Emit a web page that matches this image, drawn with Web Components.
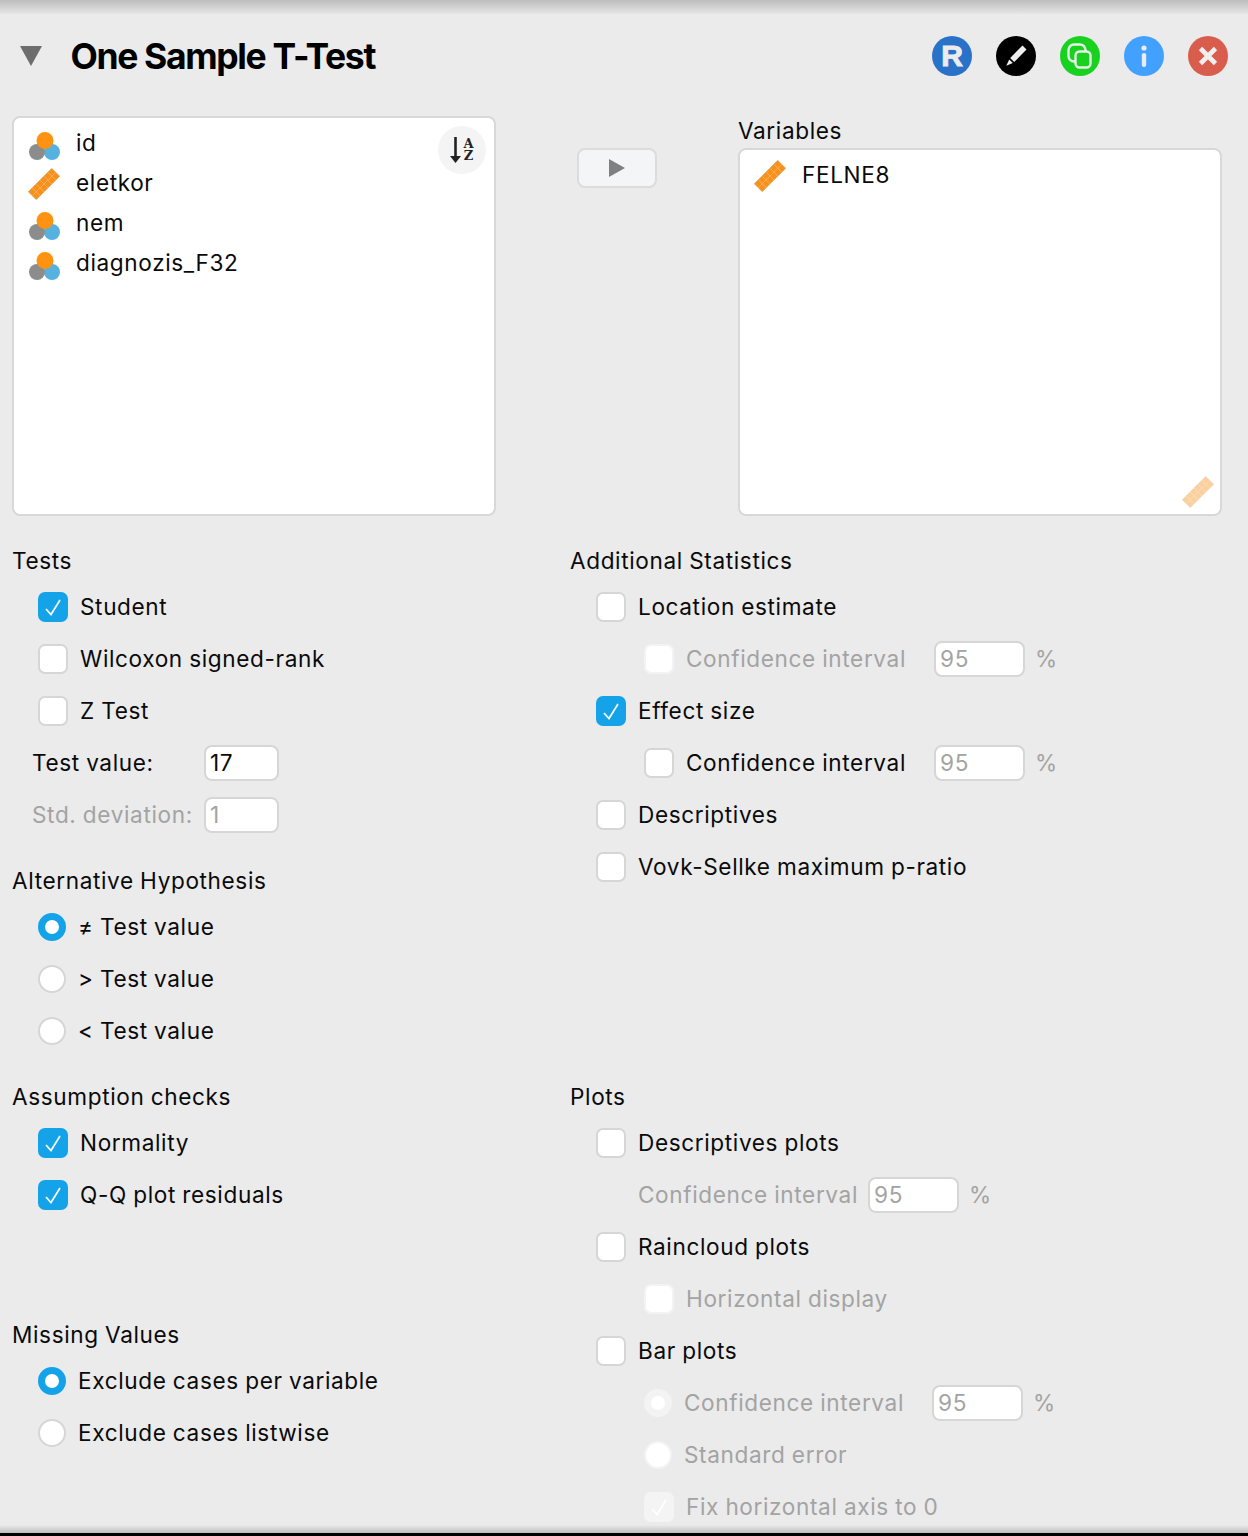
<!DOCTYPE html>
<html lang="en"><head><meta charset="utf-8"><title>One Sample T-Test</title>
<style>
html,body{margin:0;padding:0;background:#ebebeb;}
body{font-family:Inter,"Noto Sans",sans-serif;font-size:22.6px;color:#0a0a0a;--ls:.62px;word-spacing:-.6px;}
</style></head><body>
<jasp-panel>
  <jasp-header title="One Sample T-Test"></jasp-header>
  <jasp-selector>
    <jasp-var slot="source" type="nominal">id</jasp-var>
    <jasp-var slot="source" type="scale">eletkor</jasp-var>
    <jasp-var slot="source" type="nominal">nem</jasp-var>
    <jasp-var slot="source" type="nominal">diagnozis_F32</jasp-var>
    <jasp-var slot="target" type="scale" wide>FELNE8</jasp-var>
  </jasp-selector>
  <jasp-options>
    <jasp-col slot="tl">
      <jasp-group title="Tests">
        <jasp-opt kind="check" checked>Student</jasp-opt>
        <jasp-opt kind="check">Wilcoxon signed-rank</jasp-opt>
        <jasp-opt kind="check">Z Test</jasp-opt>
        <jasp-field label="Test value:" value="17"></jasp-field>
        <jasp-field label="Std. deviation:" value="1" disabled></jasp-field>
      </jasp-group>
      <jasp-group title="Alternative Hypothesis">
        <jasp-opt kind="radio" checked>≠ Test value</jasp-opt>
        <jasp-opt kind="radio">&gt; Test value</jasp-opt>
        <jasp-opt kind="radio">&lt; Test value</jasp-opt>
      </jasp-group>
    </jasp-col>
    <jasp-col slot="tr">
      <jasp-group title="Additional Statistics">
        <jasp-opt kind="check">Location estimate</jasp-opt>
        <jasp-opt kind="check" sub disabled pct="95" at="934">Confidence interval</jasp-opt>
        <jasp-opt kind="check" checked>Effect size</jasp-opt>
        <jasp-opt kind="check" sub pct="95" at="934">Confidence interval</jasp-opt>
        <jasp-opt kind="check">Descriptives</jasp-opt>
        <jasp-opt kind="check">Vovk-Sellke maximum p-ratio</jasp-opt>
      </jasp-group>
    </jasp-col>
    <jasp-col slot="bl" spread>
      <jasp-group title="Assumption checks">
        <jasp-opt kind="check" checked>Normality</jasp-opt>
        <jasp-opt kind="check" checked>Q-Q plot residuals</jasp-opt>
      </jasp-group>
      <jasp-group title="Missing Values">
        <jasp-opt kind="radio" checked>Exclude cases per variable</jasp-opt>
        <jasp-opt kind="radio">Exclude cases listwise</jasp-opt>
      </jasp-group>
    </jasp-col>
    <jasp-col slot="br">
      <jasp-group title="Plots">
        <jasp-opt kind="check">Descriptives plots</jasp-opt>
        <jasp-opt kind="none" disabled pct="95" at="868">Confidence interval</jasp-opt>
        <jasp-opt kind="check">Raincloud plots</jasp-opt>
        <jasp-opt kind="check" sub disabled>Horizontal display</jasp-opt>
        <jasp-opt kind="check">Bar plots</jasp-opt>
        <jasp-opt kind="radio" sub disabled checked pct="95" at="932">Confidence interval</jasp-opt>
        <jasp-opt kind="radio" sub disabled>Standard error</jasp-opt>
        <jasp-opt kind="check" sub disabled checked>Fix horizontal axis to 0</jasp-opt>
      </jasp-group>
    </jasp-col>
  </jasp-options>
</jasp-panel>
<script>
const RULER=`<svg width="32" height="32" viewBox="0 0 32 32" style="display:block"><g transform="rotate(-45 16 16)"><rect x="-.5" y="10.5" width="33" height="11" fill="#f7911c" stroke="#dd9a4c" stroke-width=".8"/><path d="M-.5 16H32.5M5 10.5V21.5M10.5 10.5V21.5M16 10.5V21.5M21.5 10.5V21.5M27 10.5V21.5" stroke="#ffb15e" stroke-width=".8" fill="none"/></g></svg>`;
const NOMINAL=`<svg width="32" height="32" viewBox="0 0 32 32" style="display:block"><circle cx="24" cy="24" r="8" fill="#55b2e0"/><circle cx="9" cy="24" r="8" fill="#8c8c8c"/><circle cx="17" cy="12.5" r="8.5" fill="#ff9210"/></svg>`;
const def=(n,html)=>customElements.define(n,class extends HTMLElement{
  connectedCallback(){ if(this.shadowRoot) return; this.attachShadow({mode:'open'}).innerHTML=typeof html==='function'?html(this):html; }
});
def('jasp-panel',`<style>:host{display:flex;flex-direction:column;height:1536px;overflow:hidden;background:#ebebeb}
.top{height:14px;flex:none;background:linear-gradient(#bdbdbd,#e6e6e6)}
main{flex:1;min-height:0;display:flex;flex-direction:column}
.bot{flex:none;height:8px;background:linear-gradient(#ebebeb,#bdbdbd)}
.blk{flex:none;height:3px;background:#000}</style>
<div class="top"></div><main><slot></slot></main><div class="bot"></div><div class="blk"></div>`);
def('jasp-header',e=>`<style>:host{display:flex;align-items:center;height:84px;flex:none;padding:0 20px;font:inherit}
.tri{width:0;height:0;border-left:11.5px solid transparent;border-right:11.5px solid transparent;border-top:20px solid #6d6d6d;margin-right:28.5px}
h1{margin:2px 0 0;font:700 35.5px/42px Inter,sans-serif;letter-spacing:-1.35px;word-spacing:0;color:#000;flex:1}
.btns{display:flex;gap:24px}
.b{width:40px;height:40px;border-radius:50%;display:flex;align-items:center;justify-content:center;color:#ececec}
.r{font:700 30px/40px "Liberation Sans",sans-serif;-webkit-text-stroke:1px #ececec}
svg{display:block}</style>
<div class="tri"></div><h1>${e.getAttribute('title')}</h1>
<div class="btns">
<div class="b r" style="background:#2a72c8">R</div>
<div class="b" style="background:#000"><svg width="40" height="40" viewBox="0 0 40 40" fill="#efefef"><path d="M26.5 9.5 30.5 13.5 18.2 26 14.2 22Z"/><path d="M13.2 23.4 16.8 27 10.3 29.7Z"/></svg></div>
<div class="b" style="background:#19d11f"><svg width="40" height="40" viewBox="0 0 40 40" fill="none" stroke="#e8efe8" stroke-width="2.4"><rect x="8.5" y="8.5" width="17" height="17" rx="5.5"/><rect x="15.5" y="15.5" width="15" height="16" rx="4" fill="#19d11f"/></svg></div>
<div class="b" style="background:#42a0ff"><svg width="40" height="40" viewBox="0 0 40 40" fill="#ececec"><circle cx="20" cy="12" r="2.6"/><rect x="17.8" y="17" width="4.4" height="14" rx="2.2"/></svg></div>
<div class="b" style="background:#d85d4d"><svg width="40" height="40" viewBox="0 0 40 40" stroke="#efefef" stroke-width="4.6"><path d="M12.5 12.5 27.5 27.5M27.5 12.5 12.5 27.5"/></svg></div>
</div>`);
def('jasp-selector',`<style>:host{display:block;flex:none;padding:18px 0 0 12px;--b:#d8d8d8}
.g{display:grid;grid-template-columns:484px 242px 484px;height:400px}
.box{background:#fff;border:2px solid var(--b);border-radius:8px;box-sizing:border-box;position:relative}
.src{padding:5px 0 0 14px}
.sort{position:absolute;top:8px;right:8px;width:48px;height:48px;border-radius:50%;background:#f4f4f5;display:flex;align-items:center;justify-content:center;gap:2px}
.az{display:flex;flex-direction:column;font:700 13px/12px "DejaVu Serif","DejaVu Sans",sans-serif;color:#222;text-align:center}
.mid{padding:32px 0 0 81px}
.arrow{width:80px;height:40px;box-sizing:border-box;border:2px solid #dcdcdc;border-radius:8px;background:#f4f5f6;display:flex;align-items:center;justify-content:center}
.tri{width:0;height:0;border-top:9px solid transparent;border-bottom:9px solid transparent;border-left:16px solid #808080}
.right{display:flex;flex-direction:column}
.lab{height:32px;line-height:29px;letter-spacing:var(--ls)}
.tgt{flex:1;padding:5px 0 0 14px}
.corner{position:absolute;right:6px;bottom:6px;opacity:.42;display:block}</style>
<div class="g">
<div class="box src"><slot name="source"></slot><div class="sort"><svg width="11" height="28" viewBox="0 0 11 28"><path d="M5.5 1V24" stroke="#222" stroke-width="2.6"/><path d="M0 20H11L5.5 27Z" fill="#222"/></svg><div class="az"><span>A</span><span>Z</span></div></div></div>
<div class="mid"><div class="arrow"><div class="tri"></div></div></div>
<div class="right"><div class="lab">Variables</div><div class="box tgt"><slot name="target"></slot><span class="corner">${RULER}</span></div></div>
</div>`);
def('jasp-var',e=>`<style>:host{display:flex;align-items:center;height:40px;gap:16px;letter-spacing:var(--ls)}
.i{width:32px;height:32px;flex:none;margin-top:2px}
.x{padding-bottom:2px}</style>
<span class="i">${e.getAttribute('type')==='scale'?RULER:NOMINAL}</span><span class="x"><slot></slot></span>`);
def('jasp-options',`<style>:host{display:grid;grid-template-columns:558px 1fr;padding:33px 0 0 12px;row-gap:36px}</style>
<slot name="tl"></slot><slot name="tr"></slot><slot name="bl"></slot><slot name="br"></slot>`);
def('jasp-col',e=>`<style>:host{display:flex;flex-direction:column;gap:${e.hasAttribute('spread')?'110':'36'}px}</style><slot></slot>`);
def('jasp-group',e=>`<style>:host{display:flex;flex-direction:column;gap:16px}
.t{height:24px;line-height:23px;letter-spacing:var(--ls)}
.rows{display:flex;flex-direction:column;gap:16px}</style>
<div class="t">${e.getAttribute('title')}</div><div class="rows"><slot></slot></div>`);
const INPUT=`.in{box-sizing:border-box;height:36px;border:2px solid #d6d6d6;border-radius:8px;background:#fff;padding-left:4px;line-height:32px;flex:none;letter-spacing:var(--ls)}`;
def('jasp-opt',e=>{
 const k=e.getAttribute('kind'),dis=e.hasAttribute('disabled'),chk=e.hasAttribute('checked'),sub=e.hasAttribute('sub');
 let mark='';
 const tick=`<svg width="26" height="26" viewBox="0 0 26 26" fill="none" stroke="#fff" stroke-width="1.7"><path d="M6 15 11 20.5 20 6"/></svg>`;
 if(k==='check') mark=`<span class="m c ${chk?'on':''} ${dis?'dis':''}">${chk?tick:''}</span>`;
 if(k==='radio') mark=`<span class="m r ${chk?'on':''} ${dis?'dis':''}"></span>`;
 const pct=e.getAttribute('pct');
 const pad=k==='none'?68:sub?74:26;
 const offs=pct?(+e.getAttribute('at'))-570-pad-(k==='none'?0:k==='radio'?40:42):0;
 return `<style>:host{display:flex;align-items:center;height:36px;padding-left:${pad}px;letter-spacing:var(--ls);color:${dis?'#a3a3a3':'#0a0a0a'}}
.m{flex:none;box-sizing:border-box;background:#fff;display:flex;align-items:center;justify-content:center}
.c{width:30px;height:30px;border:2px solid #d6d6d6;border-radius:7px;margin-right:12px}
.c.on{background:#14a3e8;border-color:#14a3e8}
.c.dis{border-color:#f3f3f3}
.c.dis.on{background:#f4f4f4;border-color:#f4f4f4}
.r{width:28px;height:28px;border:2px solid #d6d6d6;border-radius:50%;margin-right:12px}
.r.on{border:7px solid #14a3e8}
.r.dis{border-color:#f3f3f3}
.r.dis.on{border:7px solid #f3f3f3}
.lb{white-space:nowrap;padding-bottom:2px;${pct?`width:${offs}px;flex:none;`:''}}
${INPUT}.in{width:91px;color:#a3a3a3}
.p{margin-left:10px;color:#a3a3a3;padding-bottom:2px}</style>
${mark}<span class="lb"><slot></slot></span>${pct?`<span class="in">${pct}</span><span class="p">%</span>`:''}`;
});
def('jasp-field',e=>{const dis=e.hasAttribute('disabled');return `<style>:host{display:flex;align-items:center;height:36px;padding-left:20px;letter-spacing:var(--ls);color:${dis?'#a3a3a3':'#0a0a0a'}}
.l{width:172px;flex:none;white-space:nowrap;padding-bottom:2px}${INPUT}.in{width:75px}</style>
<span class="l">${e.getAttribute('label')}</span><span class="in">${e.getAttribute('value')}</span>`});
</script>
</body></html>
